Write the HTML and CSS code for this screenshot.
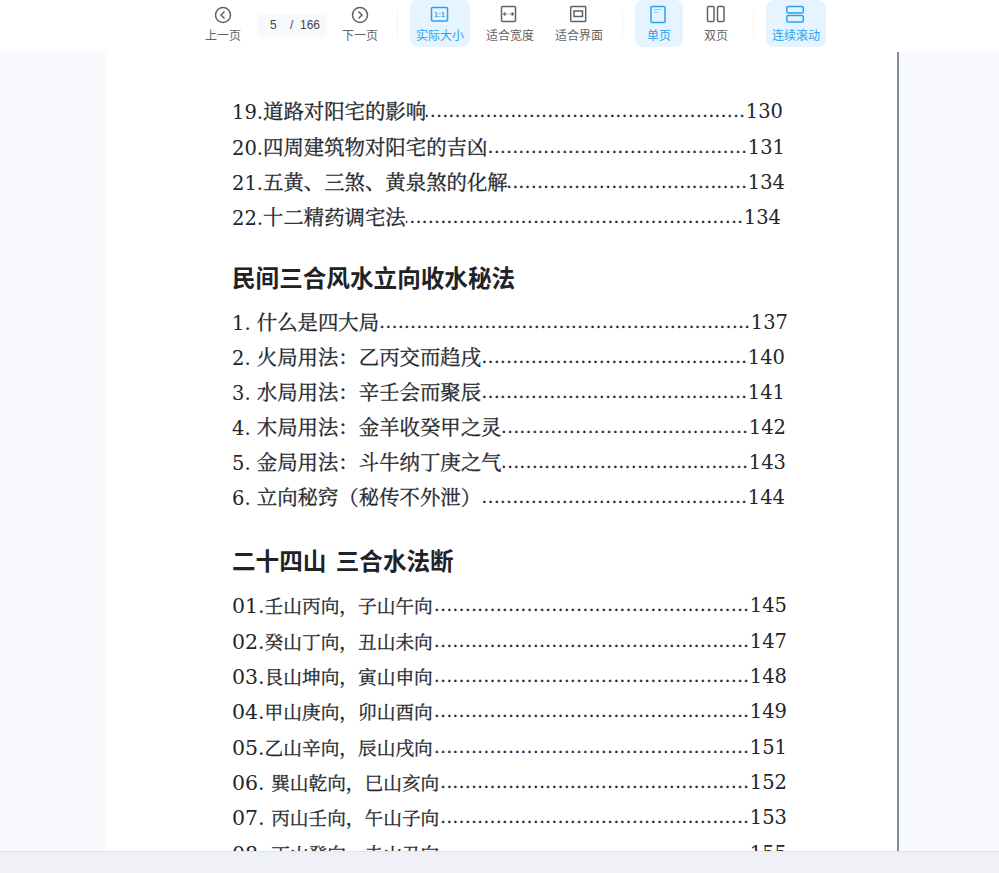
FILE: index.html
```html
<!DOCTYPE html>
<html lang="zh">
<head>
<meta charset="utf-8">
<title>阅读器</title>
<link rel="stylesheet" href="styles.css">
</head>
<body>
<header class="toolbar">
  <button class="tool prev">
    <svg class="ico" viewBox="0 0 20 20"><circle cx="10" cy="10" r="7.5"/><path d="M11.5 6.5 8 10l3.500 3.500"/></svg>
    <span>上一页</span>
  </button>
  <div class="pager"><span class="cur">5</span><span class="sl">/</span><span>166</span></div>
  <button class="tool next">
    <svg class="ico" viewBox="0 0 20 20"><circle cx="10" cy="10" r="7.500"/><path d="M8.500 6.500 12 10l-3.500 3.500"/></svg>
    <span>下一页</span>
  </button>
  <i class="sep first-sep"></i>
  <button class="tool wide on">
    <svg class="ico" viewBox="0 0 20 20"><rect x="1.500" y="2.500" width="16" height="13.500" rx="1"/><text x="9.500" y="12" class="one">1:1</text></svg>
    <span>实际大小</span>
  </button>
  <button class="tool wide">
    <svg class="ico" viewBox="0 0 20 20"><rect x="1.500" y="1.500" width="14" height="15" rx="1"/><path class="thin" d="M3.500 9h4M5.200 7.300 3.500 9l1.700 1.700M13.500 9h-4M11.800 7.300 13.500 9l-1.700 1.700"/></svg>
    <span>适合宽度</span>
  </button>
  <button class="tool wide fit">
    <svg class="ico" viewBox="0 0 20 20"><rect x="1.700" y="1.500" width="15" height="15" rx="1"/><rect x="5" y="6" width="8.500" height="5.500"/></svg>
    <span>适合界面</span>
  </button>
  <i class="sep"></i>
  <button class="tool on">
    <svg class="ico" viewBox="0 0 20 20"><rect x="2" y="1.500" width="14" height="16" rx="1"/><path class="bar" d="M5 4.500h7M5 7.500h4"/></svg>
    <span>单页</span>
  </button>
  <button class="tool dbl">
    <svg class="ico" viewBox="0 0 20 20"><rect x="1.500" y="1.500" width="6.500" height="15" rx="1"/><rect x="11.500" y="1.500" width="6.500" height="15" rx="1"/></svg>
    <span>双页</span>
  </button>
  <i class="sep"></i>
  <button class="tool wide on">
    <svg class="ico" viewBox="0 0 20 20"><rect x="0.800" y="1.500" width="16.500" height="6.500" rx="1.500"/><rect x="0.800" y="10.500" width="16.500" height="6.500" rx="1.500"/></svg>
    <span>连续滚动</span>
  </button>
</header>

<main class="viewer">
  <article class="page">
    <div class="row e783"><span class="t"><span class="k">19.</span>道路对阳宅的影响</span><span class="d"></span><span class="n">130</span></div>
    <div class="row e785"><span class="t"><span class="k">20.</span>四周建筑物对阳宅的吉凶</span><span class="d"></span><span class="n">131</span></div>
    <div class="row e785"><span class="t"><span class="k">21.</span>五黄、三煞、黄泉煞的化解</span><span class="d"></span><span class="n">134</span></div>
    <div class="row e781"><span class="t"><span class="k">22.</span>十二精药调宅法</span><span class="d"></span><span class="n">134</span></div>

    <h2 class="head first">民间三合风水立向收水秘法</h2>
    <div class="row"><span class="t"><span class="k">1. </span>什么是四大局</span><span class="d"></span><span class="n">137</span></div>
    <div class="row e785"><span class="t"><span class="k">2. </span>火局用法：乙丙交而趋戌</span><span class="d"></span><span class="n">140</span></div>
    <div class="row e785"><span class="t"><span class="k">3. </span>水局用法：辛壬会而聚辰</span><span class="d"></span><span class="n">141</span></div>
    <div class="row e786"><span class="t"><span class="k">4. </span>木局用法：金羊收癸甲之灵</span><span class="d"></span><span class="n">142</span></div>
    <div class="row e786"><span class="t"><span class="k">5. </span>金局用法：斗牛纳丁庚之气</span><span class="d"></span><span class="n">143</span></div>
    <div class="row e785"><span class="t"><span class="k">6. </span>立向秘窍（秘传不外泄）</span><span class="d"></span><span class="n">144</span></div>

    <h2 class="head">二十四山 三合水法断</h2>
    <div class="row sm"><span class="t"><span class="k">01.</span>壬山丙向，子山午向</span><span class="d"></span><span class="n">145</span></div>
    <div class="row sm"><span class="t"><span class="k">02.</span>癸山丁向，丑山未向</span><span class="d"></span><span class="n">147</span></div>
    <div class="row sm"><span class="t"><span class="k">03.</span>艮山坤向，寅山申向</span><span class="d"></span><span class="n">148</span></div>
    <div class="row sm"><span class="t"><span class="k">04.</span>甲山庚向，卯山酉向</span><span class="d"></span><span class="n">149</span></div>
    <div class="row sm"><span class="t"><span class="k">05.</span>乙山辛向，辰山戌向</span><span class="d"></span><span class="n">151</span></div>
    <div class="row sm"><span class="t"><span class="k">06. </span>巽山乾向，巳山亥向</span><span class="d"></span><span class="n">152</span></div>
    <div class="row sm"><span class="t"><span class="k">07. </span>丙山壬向，午山子向</span><span class="d"></span><span class="n">153</span></div>
    <div class="row sm"><span class="t"><span class="k">08. </span>丁山癸向，未山丑向</span><span class="d"></span><span class="n">155</span></div>
  </article>
</main>
<footer class="foot"></footer>
</body>
</html>
```
FILE: styles.css
```css
* { box-sizing: border-box; }
html, body { margin: 0; height: 100%; }
body {
  width: 999px; height: 873px; overflow: hidden;
  display: flex; flex-direction: column;
  background: #f7f9fc;
  font-family: "Noto Sans CJK SC", "Liberation Sans", sans-serif;
}
.toolbar {
  height: 52px; flex: none; background: #fff;
  display: flex; align-items: flex-start; gap: 10px;
  padding-left: 197px;
}
.tool {
  width: 48px; height: 47px; padding: 5px 0 0;
  border: 0; border-radius: 8px; background: transparent;
  display: flex; flex-direction: column; align-items: center; gap: 2px;
  font: 12px/16px "Noto Sans CJK SC", sans-serif; color: #5f6368;
  white-space: nowrap;
}
.tool.prev { width: 52px; margin-right: -2px; }
.tool.next { width: 50px; margin-left: -2px; }
.tool.wide { width: 60px; }
.tool.dbl, .tool.fit { margin: 0 1px 0 -1px; }
.tool.on { background: #e6f4ff; color: #27a3ee; }
.ico {
  width: 20px; height: 20px; flex: none;
  fill: none; stroke: #5f6368; stroke-width: 1.5;
}
.on .ico { stroke: #27a3ee; }
.thin { stroke-width: 1.1; }
.bar { stroke-width: 1.2; stroke: #8cc8f2; }
.one {
  font: 700 7.500px "Liberation Sans", sans-serif; text-anchor: middle;
  fill: #4b9fdc; stroke: none;
}
.pager {
  width: 70px; height: 23px; margin-top: 14px;
  background: #f7f9fc; border-radius: 5px;
  display: flex; align-items: center;
  padding-left: 13px;
  font: 12px/23px "Liberation Sans", sans-serif; color: #444;
}
.cur { width: 20px; }
.sl { width: 10px; }
.sep { width: 1px; height: 26px; margin: 11px 2px 0; background: #f1f2f4; }
.viewer { flex: 1; min-height: 0; overflow: hidden; display: flex; }
.page {
  width: 793px; margin-left: 106px;
  background: #fff; border-right: 2px solid #838b98;
  padding: 42.4px 0 0 126px;
  color: #23262b;
}
.row {
  width: 556px; height: 35.2px;
  display: flex; align-items: center;
  font: 19.5px/35.2px "DejaVu Serif", "Noto Sans CJK SC", serif;
}
.row.e781 { width: 549px; }
.row.e783 { width: 551px; }
.row.e785 { width: 553px; }
.row.e786 { width: 554px; }
.row.sm { width: 555px; height: 35.3px; }
.t {
  flex: none; white-space: pre;
  font-size: 20.4px;
  font-family: "Noto Serif CJK SC", "DejaVu Serif", serif;
  -webkit-text-stroke: 0.3px #23262b;
}
.sm .t { font-size: 18.7px; }
.k { font-family: "DejaVu Serif", serif; font-size: 19.5px; -webkit-text-stroke: 0; }
.sm .k { font-size: 20.5px; }
.d { flex: 1; min-width: 0; height: 100%; overflow: hidden; position: relative; }
.d::before {
  content: "............................................................................................................";
  position: absolute; right: 0; white-space: nowrap;
  font-size: 16px; letter-spacing: 1.1px;
  -webkit-text-stroke: 0.4px #23262b;
}
.n { flex: none; }
.head {
  margin: 22px 0 7.4px; height: 40px;
  font: 700 23.6px/40px "Noto Sans CJK SC", sans-serif;
  word-spacing: 4px;
  color: #1f2226;
}
.head:not(.first) { margin: 24.4px 0 8.4px; }
.foot { height: 22px; flex: none; background: #eff1f6; border-top: 1px solid #e1e4e9; }
```
